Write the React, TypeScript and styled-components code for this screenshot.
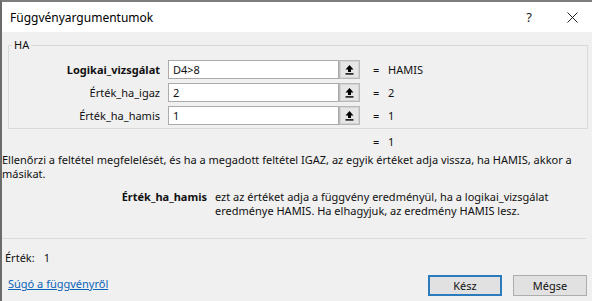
import styled, { createGlobalStyle } from "styled-components";

const GlobalStyle = createGlobalStyle`
  html, body {
    margin: 0;
    padding: 0;
    background: #f0f0f0;
  }
  body {
    font-family: "Noto Sans", "Open Sans", sans-serif;
    font-size: 11px;
    color: #111;
  }
`;

const LABEL_W = 151;
const INPUT_W = 171;
const PICK_W = 21;

const Dialog = styled.div`
  width: 592px;
  height: 301px;
  box-sizing: border-box;
  border-top: 2px solid #7d7d7d;
  border-left: 2px solid #6b6b6b;
  background: #f0f0f0;
  display: flex;
  flex-direction: column;
  overflow: hidden;
`;

const TitleBar = styled.div`
  height: 30px;
  background: #fff;
  display: flex;
  align-items: center;
  font-size: 12px;

  .title {
    flex: 1;
    padding-left: 8px;
    color: #000;
  }
`;

const TitleButton = styled.div<{ $w: number }>`
  width: ${(p) => p.$w}px;
  height: 30px;
  display: flex;
  align-items: center;
  justify-content: center;
  font-size: 13px;
  color: #222;
`;

const GroupBox = styled.fieldset`
  margin: 6px 4px 0 6px;
  padding: 0 0 3px 0;
  border: 1px solid #d9d9d9;
  height: 91px;
  box-sizing: border-box;

  legend {
    margin-left: 3px;
    padding: 0 2px;
    line-height: 14px;
    font-size: 11px;
  }
`;

const ArgList = styled.div`
  display: flex;
  flex-direction: column;
  gap: 4px;
  padding-top: 8px;
`;

const ArgRow = styled.div`
  display: flex;
  align-items: center;
  height: 19px;
`;

const ArgLabel = styled.div<{ $bold?: boolean }>`
  width: ${LABEL_W}px;
  margin-right: 8px;
  text-align: right;
  font-weight: ${(p) => (p.$bold ? 700 : 400)};
`;

const InputBox = styled.div`
  width: ${INPUT_W}px;
  height: 19px;
  box-sizing: border-box;
  border: 1px solid #ababab;
  background: #fff;
  padding-left: 4px;
  display: flex;
  align-items: center;
`;

const PickButton = styled.div`
  width: ${PICK_W}px;
  height: 19px;
  box-sizing: border-box;
  border: 1px solid #b9b9b9;
  background: #e6e6e6;
  box-shadow: inset 0 0 0 1px #d4d4d4;
  display: flex;
  align-items: center;
  justify-content: center;
`;

const Eq = styled.span`
  margin-left: 13px;
  width: 15px;
`;

const ResultLine = styled.div`
  margin-top: 6px;
  padding-left: ${6 + 1 + LABEL_W + 8 + INPUT_W + PICK_W}px;
  line-height: 14px;
  display: flex;
`;

const Description = styled.div`
  margin-top: 4px;
  line-height: 14px;
`;

const ArgHelp = styled.div`
  margin-top: 9px;
  display: grid;
  grid-template-columns: 205px 1fr;
  column-gap: 8px;
  line-height: 14px;

  .name {
    text-align: right;
    font-weight: 700;
  }
`;

const Separator = styled.div`
  margin: 20px 6px 0 0;
  height: 1px;
  background: #dadada;
`;

const ValueLine = styled.div`
  margin-top: 12px;
  padding-left: 3px;
  line-height: 14px;

  span {
    margin-left: 9px;
  }
`;

const Footer = styled.div`
  margin-top: 10px;
  display: flex;
  align-items: center;
  padding: 0 5px 0 6px;
  gap: 11px;
`;

const HelpLink = styled.a`
  flex: 1;
  color: #0a64b8;
  text-decoration: underline;
  padding-bottom: 4px;
  cursor: pointer;
`;

const Button = styled.button<{ $default?: boolean }>`
  width: 74px;
  height: 21px;
  box-sizing: border-box;
  font-family: inherit;
  font-size: 11px;
  color: #111;
  background: #e1e1e1;
  border: ${(p) => (p.$default ? "2px solid #2c7bbd" : "1px solid #adadad")};
  padding: 0;
`;

const PickIcon = () => (
  <svg width="9" height="10" viewBox="0 0 9 10">
    <path d="M4.5 0 L0.5 4.5 H3 V7 H6 V4.5 H8.5 Z" fill="#000" />
    <rect x="0.5" y="8.2" width="8" height="1.4" fill="#000" />
  </svg>
);

const CloseIcon = () => (
  <svg width="11" height="11" viewBox="0 0 11 11">
    <path d="M0.5 0.5 L10.5 10.5 M10.5 0.5 L0.5 10.5" stroke="#222" strokeWidth="1" />
  </svg>
);

const args = [
  { name: "Logikai_vizsgálat", value: "D4>8", result: "HAMIS", bold: true },
  { name: "Érték_ha_igaz", value: "2", result: "2" },
  { name: "Érték_ha_hamis", value: "1", result: "1" },
];

export default function App() {
  return (
    <>
      <GlobalStyle />
      <Dialog>
        <TitleBar>
          <span className="title">Függvényargumentumok</span>
          <TitleButton $w={46}>?</TitleButton>
          <TitleButton $w={40}>
            <CloseIcon />
          </TitleButton>
        </TitleBar>

        <GroupBox>
          <legend>HA</legend>
          <ArgList>
            {args.map((a) => (
              <ArgRow key={a.name}>
                <ArgLabel $bold={a.bold}>{a.name}</ArgLabel>
                <InputBox>{a.value}</InputBox>
                <PickButton>
                  <PickIcon />
                </PickButton>
                <Eq>=</Eq>
                <span>{a.result}</span>
              </ArgRow>
            ))}
          </ArgList>
        </GroupBox>

        <ResultLine>
          <Eq>=</Eq>
          <span>1</span>
        </ResultLine>

        <Description>
          Ellenőrzi a feltétel megfelelését, és ha a megadott feltétel IGAZ, az egyik értéket adja vissza, ha HAMIS, akkor a
          <br />
          másikat.
        </Description>

        <ArgHelp>
          <span className="name">Érték_ha_hamis</span>
          <span>
            ezt az értéket adja a függvény eredményül, ha a logikai_vizsgálat
            <br />
            eredménye HAMIS. Ha elhagyjuk, az eredmény HAMIS lesz.
          </span>
        </ArgHelp>

        <Separator />

        <ValueLine>
          Érték:<span>1</span>
        </ValueLine>

        <Footer>
          <HelpLink>Súgó a függvényről</HelpLink>
          <Button $default>Kész</Button>
          <Button>Mégse</Button>
        </Footer>
      </Dialog>
    </>
  );
}
